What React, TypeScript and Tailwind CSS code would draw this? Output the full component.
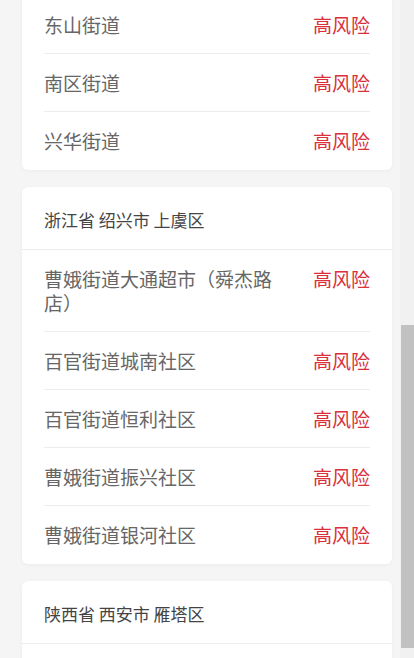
const groups = [
  {
    title: "",
    items: ["东山街道", "南区街道", "兴华街道"],
  },
  {
    title: "浙江省 绍兴市 上虞区",
    items: [
      "曹娥街道大通超市（舜杰路店）",
      "百官街道城南社区",
      "百官街道恒利社区",
      "曹娥街道振兴社区",
      "曹娥街道银河社区",
    ],
  },
  {
    title: "陕西省 西安市 雁塔区",
    items: [],
  },
];

function RiskRow({ name, last }: { name: string; last: boolean }) {
  return (
    <div
      className={`flex items-start justify-between pt-[17px] ${
        last ? "pb-[17px]" : "border-b border-[#ededed] pb-[16px]"
      }`}
    >
      <span className="mr-[30px] flex-1 text-[19px] leading-[24px] text-[#666]">
        {name}
      </span>
      <span className="text-[19px] leading-[24px] text-[#d9303a]">高风险</span>
    </div>
  );
}

export default function App() {
  return (
    <div
      className="relative h-[658px] overflow-hidden bg-[#f5f5f5]"
      style={{ fontFamily: '"Noto Sans CJK SC", "Noto Sans", sans-serif' }}
    >
      <div className="-mt-[4px] flex flex-col gap-[17px] px-[22px]">
        {groups.map((group, gi) => (
          <div
            key={gi}
            className={`bg-white shadow-[0_1px_4px_rgba(0,0,0,0.04)] ${
              gi === 0 ? "rounded-b-md" : "rounded-md"
            }`}
          >
            {group.title && (
              <div className="border-b border-[#ededed] px-[22px] pb-[18px] pt-[21px] text-[17px] leading-[23px] text-[#444]">
                {group.title}
              </div>
            )}
            <div className="px-[22px]">
              {group.items.length === 0 && <div className="h-[58px]" />}
              {group.items.map((item, i) => (
                <RiskRow
                  key={item}
                  name={item}
                  last={i === group.items.length - 1}
                />
              ))}
            </div>
          </div>
        ))}
      </div>

      {/* fake scrollbar */}
      <div className="absolute bottom-0 right-0 top-0 w-[14px] bg-[#f1f1f1]">
        <div className="ml-[1px] mt-[325px] h-[323px] w-[13px] bg-[#c1c1c1]" />
      </div>
    </div>
  );
}
